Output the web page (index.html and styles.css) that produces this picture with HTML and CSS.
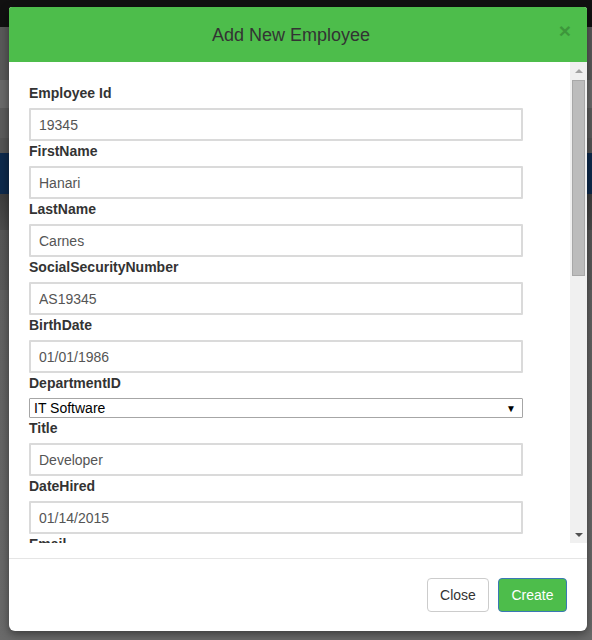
FILE: index.html
```html
<!DOCTYPE html>
<html>
<head>
<meta charset="utf-8">
<title>Add New Employee</title>
<link rel="stylesheet" href="styles.css">
</head>
<body>
<div class="modal">
  <div class="modal-header">
    <h4 class="modal-title">Add New Employee</h4>
    <span class="close">&times;</span>
  </div>
  <div class="modal-body">
    <div class="scroll">
      <form class="form-area">
        <label class="lbl">Employee Id</label>
        <input class="ctl" type="text" value="19345">
        <label class="lbl">FirstName</label>
        <input class="ctl" type="text" value="Hanari">
        <label class="lbl">LastName</label>
        <input class="ctl" type="text" value="Carnes">
        <label class="lbl">SocialSecurityNumber</label>
        <input class="ctl" type="text" value="AS19345">
        <label class="lbl">BirthDate</label>
        <input class="ctl" type="text" value="01/01/1986">
        <label class="lbl">DepartmentID</label>
        <div class="select"><span>IT Software</span><span class="caret">&#9660;</span></div>
        <label class="lbl">Title</label>
        <input class="ctl" type="text" value="Developer">
        <label class="lbl">DateHired</label>
        <input class="ctl" type="text" value="01/14/2015">
        <label class="lbl">Email</label>
        <input class="ctl" type="text" value="">
      </form>
      <div class="scrollbar">
        <div class="sb-btn"><span class="tri-up"></span></div>
        <div class="sb-track"><div class="sb-thumb"></div></div>
        <div class="sb-btn"><span class="tri-down"></span></div>
      </div>
    </div>
  </div>
  <div class="modal-footer">
    <button class="btn btn-default" type="button">Close</button>
    <button class="btn btn-create" type="button">Create</button>
  </div>
</div>
</body>
</html>
```

FILE: styles.css
```css
html, body {
  margin: 0;
  padding: 0;
}
body {
  width: 592px;
  height: 640px;
  overflow: hidden;
  font-family: "Liberation Sans", Arial, sans-serif;
  background: linear-gradient(to bottom,
    #111111 0px, #111111 27px,
    #595959 27px, #595959 80px,
    #6a6a6a 80px, #6a6a6a 108px,
    #5c5c5c 108px, #5c5c5c 138px,
    #555555 138px, #555555 153px,
    #0e2a4c 153px, #0e2a4c 194px,
    #3e3e3e 194px, #4c4c4c 230px,
    #575757 230px, #5a5a5a 290px,
    #616161 290px, #6a6a6a 640px);
  padding-top: 7px;
  box-sizing: border-box;
}
.modal {
  margin-left: 9px;
  width: 578px;
  height: 624px;
  background: #fff;
  border-radius: 3px 3px 6px 6px;
  box-shadow: 0 3px 10px rgba(0, 0, 0, 0.45);
  display: flex;
  flex-direction: column;
  overflow: hidden;
}
.modal-header {
  height: 55px;
  flex: none;
  background: #4dbd4b;
  display: flex;
  align-items: center;
  justify-content: center;
  padding-right: 14px;
  position: relative;
}
.modal-title {
  margin: 0;
  font-size: 18px;
  font-weight: normal;
  color: #333;
  line-height: 20px;
  padding-top: 1px;
}
.close {
  position: absolute;
  right: 16px;
  top: 13px;
  font-size: 21px;
  font-weight: bold;
  line-height: 21px;
  color: #000;
  opacity: 0.2;
}
.modal-body {
  flex: none;
  padding-bottom: 15px;
}
.scroll {
  height: 481px;
  display: flex;
  overflow: hidden;
}
.form-area {
  flex: 1;
  margin: 0;
  padding: 21px 0 0 20px;
  overflow: hidden;
}
.lbl {
  display: block;
  font-size: 14px;
  font-weight: bold;
  line-height: 20px;
  height: 20px;
  margin-bottom: 5px;
  color: #333;
}
.ctl {
  display: block;
  box-sizing: border-box;
  width: 494px;
  height: 33px;
  margin: 0;
  padding: 0 8px;
  border: 2px solid #dadada;
  border-radius: 1px;
  font-family: "Liberation Sans", Arial, sans-serif;
  font-size: 14px;
  color: #555;
  background: #fff;
  outline: none;
}
.select {
  box-sizing: border-box;
  width: 494px;
  height: 20px;
  border: 1px solid #a6a6a6;
  border-radius: 1px;
  display: flex;
  align-items: center;
  justify-content: space-between;
  padding: 0 6px 0 4px;
  font-size: 14px;
  color: #000;
}
.caret {
  font-size: 10px;
  color: #000;
}
.scrollbar {
  width: 17px;
  flex: none;
  background: #f0f0f0;
  display: flex;
  flex-direction: column;
}
.sb-btn {
  height: 17px;
  flex: none;
  display: flex;
  align-items: center;
  justify-content: center;
}
.tri-up {
  width: 0;
  height: 0;
  border-left: 4px solid transparent;
  border-right: 4px solid transparent;
  border-bottom: 4px solid #a3a3a3;
}
.tri-down {
  width: 0;
  height: 0;
  border-left: 4px solid transparent;
  border-right: 4px solid transparent;
  border-top: 4px solid #505050;
}
.sb-track {
  flex: 1;
  padding: 1px 2px 0 2px;
}
.sb-thumb {
  box-sizing: border-box;
  height: 196px;
  background: #bcbcbc;
  border: 1px solid #a8a8a8;
}
.modal-footer {
  border-top: 1px solid #e5e5e5;
  padding: 19px 20px 0 0;
  display: flex;
  justify-content: flex-end;
  gap: 9px;
}
.btn {
  box-sizing: border-box;
  height: 34px;
  padding: 0 12px;
  font-family: "Liberation Sans", Arial, sans-serif;
  font-size: 14px;
  border-radius: 4px;
  border: 1px solid #ccc;
  cursor: pointer;
}
.btn-default {
  width: 62px;
  background: #fff;
  color: #333;
}
.btn-create {
  width: 69px;
  background: #4dbd4b;
  border-color: #3a78b5;
  color: #fff;
}
```
